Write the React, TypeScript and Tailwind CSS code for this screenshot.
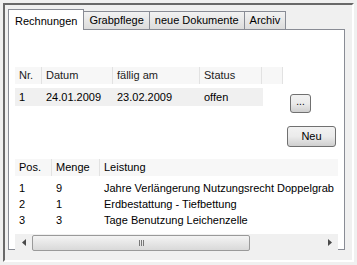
const tabs = ["Rechnungen", "Grabpflege", "neue Dokumente", "Archiv"];

const rows = [
  ["1", "9", "Jahre Verlängerung Nutzungsrecht Doppelgrab"],
  ["2", "1", "Erdbestattung - Tiefbettung"],
  ["3", "3", "Tage Benutzung Leichenzelle"],
];

const HeadCell = ({ w, label }: { w: string; label: string }) => (
  <div className={`${w} h-full flex items-center pl-[4px] border-r border-[#e2e2e2]`}>{label}</div>
);

const WinButton = ({ label, cls }: { label: string; cls: string }) => (
  <button
    className={`${cls} rounded-[3px] border border-[#707070] bg-gradient-to-b from-[#f2f2f2] via-[#ebebeb] to-[#cfcfcf] flex items-center justify-center leading-none`}
  >
    {label}
  </button>
);

const Arrow = ({ dir }: { dir: "l" | "r" }) => (
  <svg width="4" height="7" viewBox="0 0 4 7">
    <polygon points={dir === "l" ? "4,0 4,7 0,3.5" : "0,0 0,7 4,3.5"} fill="#4a4a4a" />
  </svg>
);

export default function App() {
  return (
    <div
      className="w-[357px] h-[265px] bg-[#f0f0f0] p-[3px] text-[11px] text-black"
      style={{ fontFamily: '"Liberation Sans", Arial, sans-serif' }}
    >
      <div className="w-full h-full border-2 border-t-[#696969] border-l-[#696969] border-b-white border-r-white pl-[3px] pt-[4px] pr-[7px]">
        {/* tab strip */}
        <div className="flex items-end h-[20px]">
          {tabs.map((t, i) =>
            i === 0 ? (
              <div
                key={t}
                className="h-[21px] -mb-px z-10 bg-white border border-b-0 border-[#898c95] px-[6px] flex items-start pt-[3px]"
              >
                {t}
              </div>
            ) : (
              <div
                key={t}
                className="h-[18px] -ml-px bg-gradient-to-b from-[#f2f2f2] to-[#dcdcdc] border border-b-0 border-[#898c95] px-[5px] flex items-center"
              >
                {t}
              </div>
            )
          )}
        </div>
        {/* panel */}
        <div className="h-[221px] bg-white border border-[#898c95] pl-[6px] pr-[6px] pt-[37px] flex flex-col">
          <div className="flex">
            <div className="w-[268px] flex flex-col">
              <div className="h-[17px] flex bg-[#f7f7f7] text-[#222]">
                <HeadCell w="w-[27px]" label="Nr." />
                <HeadCell w="w-[71px]" label="Datum" />
                <HeadCell w="w-[87px]" label="fällig am" />
                <HeadCell w="w-[62px]" label="Status" />
                <HeadCell w="w-[21px]" label="" />
              </div>
              <div className="h-[18px] mt-[4px] w-[248px] bg-[#f0f0f0] flex items-center">
                <div className="w-[27px] pl-[4px]">1</div>
                <div className="w-[71px] pl-[4px]">24.01.2009</div>
                <div className="w-[87px] pl-[4px]">23.02.2009</div>
                <div className="w-[62px] pl-[4px]">offen</div>
              </div>
            </div>
            <div className="flex-1 flex flex-col items-start">
              <WinButton label="..." cls="w-[21px] h-[19px] mt-[27px] ml-[7px] text-[10px] pb-[3px]" />
              <WinButton label="Neu" cls="w-[49px] h-[21px] mt-[13px] ml-[4px]" />
            </div>
          </div>
          <div className="mt-[12px] flex flex-col">
            <div className="h-[17px] flex bg-[#f7f7f7]">
              <HeadCell w="w-[37px]" label="Pos." />
              <HeadCell w="w-[48px]" label="Menge" />
              <div className="flex-1 h-full flex items-center pl-[4px]">Leistung</div>
            </div>
            <div className="mt-[4px] flex flex-col">
              {rows.map((r) => (
                <div key={r[0]} className="h-[16px] flex items-center">
                  <div className="w-[37px] pl-[4px]">{r[0]}</div>
                  <div className="w-[48px] pl-[4px]">{r[1]}</div>
                  <div className="pl-[4px] whitespace-nowrap">{r[2]}</div>
                </div>
              ))}
            </div>
            {/* horizontal scrollbar */}
            <div className="mt-[6px] h-[17px] bg-[#f0f0f0] flex items-center">
              <div className="w-[17px] h-full flex items-center justify-center">
                <Arrow dir="l" />
              </div>
              <div className="w-[218px] h-[16px] rounded-[2px] border border-[#9a9a9a] bg-gradient-to-b from-[#f4f4f4] to-[#d9d9d9] flex items-center justify-center">
                <div className="flex gap-[1px]">
                  <div className="w-px h-[6px] bg-[#777]" />
                  <div className="w-px h-[6px] bg-[#777]" />
                  <div className="w-px h-[6px] bg-[#777]" />
                </div>
              </div>
              <div className="flex-1" />
              <div className="w-[17px] h-full flex items-center justify-center">
                <Arrow dir="r" />
              </div>
            </div>
          </div>
        </div>
      </div>
    </div>
  );
}
